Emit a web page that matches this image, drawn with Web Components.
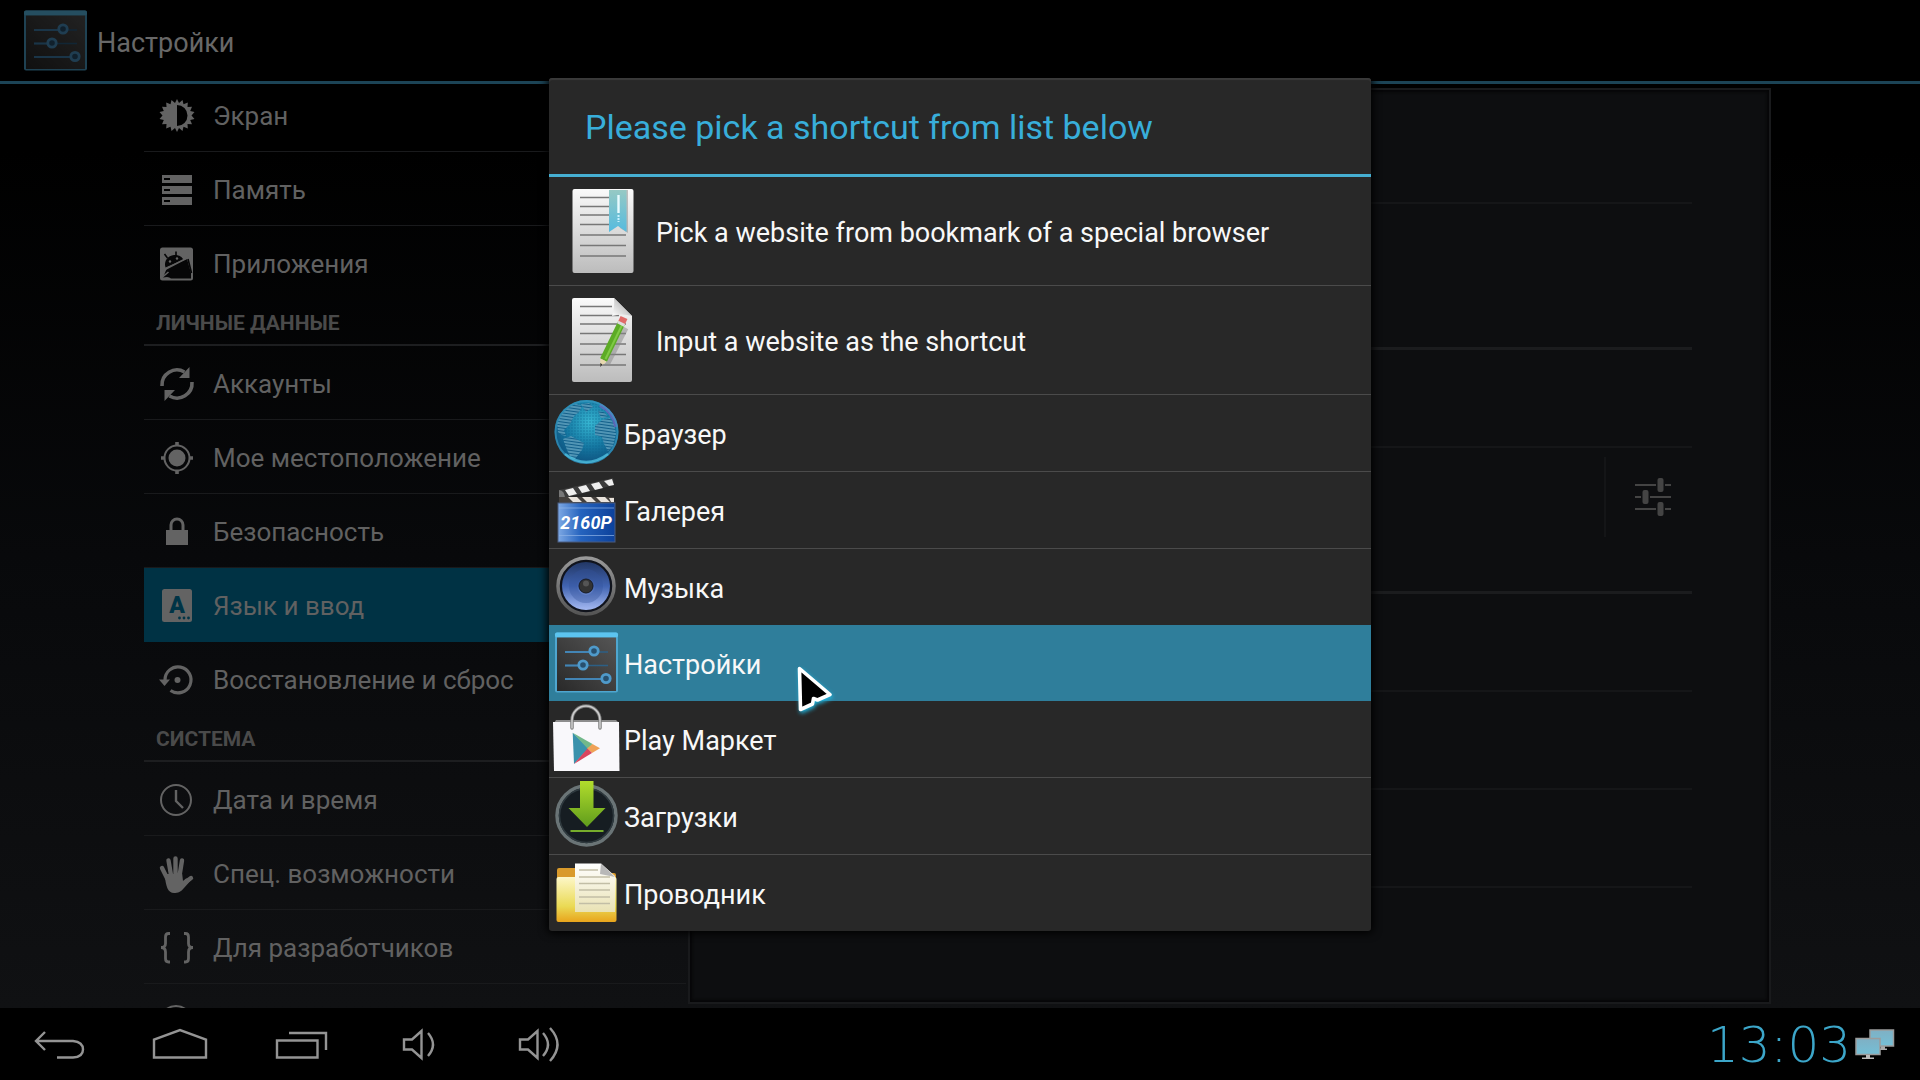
<!DOCTYPE html>
<html lang="ru">
<head>
<meta charset="utf-8">
<title>Настройки</title>
<style>
  html, body {
    height: 100%;
    margin: 0;
    background: #000;
    font-family: Roboto, "Noto Sans", sans-serif;
  }
</style>
</head>
<body>
<tablet-screen>
  <app-header slot="header" icon="settings">Настройки</app-header>

  <settings-nav slot="nav">
    <nav-item icon="display">Экран</nav-item>
    <nav-item icon="storage">Память</nav-item>
    <nav-item icon="apps" last>Приложения</nav-item>
    <nav-heading>ЛИЧНЫЕ ДАННЫЕ</nav-heading>
    <nav-item icon="sync">Аккаунты</nav-item>
    <nav-item icon="location">Мое местоположение</nav-item>
    <nav-item icon="lock">Безопасность</nav-item>
    <nav-item icon="language" selected>Язык и ввод</nav-item>
    <nav-item icon="restore" last>Восстановление и сброс</nav-item>
    <nav-heading>СИСТЕМА</nav-heading>
    <nav-item icon="clock">Дата и время</nav-item>
    <nav-item icon="hand">Спец. возможности</nav-item>
    <nav-item icon="braces">Для разработчиков</nav-item>
    <nav-item icon="about"></nav-item>
  </settings-nav>

  <pref-panel slot="panel"></pref-panel>

  <shortcut-dialog slot="dialog" heading="Please pick a shortcut from list below">
    <shortcut-item icon="bookmark" large>Pick a website from bookmark of a special browser</shortcut-item>
    <shortcut-item icon="edit" large>Input a website as the shortcut</shortcut-item>
    <shortcut-item icon="browser">Браузер</shortcut-item>
    <shortcut-item icon="gallery">Галерея</shortcut-item>
    <shortcut-item icon="music" flush>Музыка</shortcut-item>
    <shortcut-item icon="settings" selected flush>Настройки<mouse-pointer slot="pointer"></mouse-pointer></shortcut-item>
    <shortcut-item icon="play">Play Маркет</shortcut-item>
    <shortcut-item icon="downloads">Загрузки</shortcut-item>
    <shortcut-item icon="files" flush>Проводник</shortcut-item>
  </shortcut-dialog>

  <system-bar slot="system" time="13:03"></system-bar>
</tablet-screen>

<script>
/*
 * Icons. Each entry is [viewBox, markup].
 * Line icons use currentColor, launcher icons have their own colours.
 */
const pageLines = (x2) => `
  <g stroke="#777" stroke-width="1.6">
    <path d="M8 9.500H${x2}M8 18.500H${x2}M8 27H${x2}M8 36.500H${x2}M8 47H54M8 57.500H54M8 68H54"/>
  </g>`;

const ICONS = {
  display: ["0 0 36 36", `
    <path fill="currentColor" fill-rule="evenodd" d="M18 1l2 4 3.500-3 1 4.300 4.300-1.800-.3 4.500 4.500-.3-1.800 4.200 4.300 1.200-3 3.400 3 3.400-4.300 1.200 1.800 4.200-4.500-.3.3 4.500-4.300-1.800-1 4.300-3.500-3-2 4-2-4-3.500 3-1-4.300-4.300 1.800.3-4.500-4.500.3 1.800-4.200-4.300-1.200 3-3.400-3-3.400 4.300-1.200L3 8.700l4.500.3-.3-4.500 4.300 1.800 1-4.300 3.500 3zM18 7v21a10.500 10.500 0 0 0 0-21z"/>`],
  storage: ["0 0 36 36", `
    <path fill="currentColor" fill-rule="evenodd" d="M3 3h30v8H3zM3 14h30v8H3zM3 25h30v8H3zM5 6v2h6V6zM5 17v2h6v-2zM5 28v2h6v-2z"/>`],
  apps: ["0 0 36 36", `
    <rect x="1" y="1.500" width="33" height="33" rx="2.500" fill="currentColor"/>
    <path fill="#060607" d="M8 22L4 31.500 8 31c1.500 0 3 1 4 1.500h20V27l-4-14z"/>
    <path fill="#060607" d="M6.500 21.500C4.500 15 9 9.500 15 9c5-.5 8 2 9.500 4.500z"/>
    <path d="M8.500 12L5.500 8M17 10V5.500M29 13l3.500 14" stroke="#060607" stroke-width="1.600"/>
    <path d="M4 24.500L30 11M3.500 31l6-5" stroke="currentColor" stroke-width="1.600"/>
    <circle cx="11" cy="15.500" r="1.200" fill="currentColor"/><circle cx="18" cy="12.500" r="1.200" fill="currentColor"/>`],
  sync: ["0 0 36 36", `
    <g fill="none" stroke="currentColor" stroke-width="3.600">
      <path d="M3 20A15 15 0 0 1 25.500 6M33 16A15 15 0 0 1 10.500 30"/>
    </g>
    <path fill="currentColor" d="M30.500 1v11H20zM5.500 35V24H16z"/>`],
  location: ["0 0 36 36", `
    <circle cx="18" cy="18" r="8.500" fill="currentColor"/>
    <circle cx="18" cy="18" r="12.500" fill="none" stroke="currentColor" stroke-width="2"/>
    <path d="M18 2v4M18 30v4M2 18h4M30 18h4" stroke="currentColor" stroke-width="3.600"/>`],
  lock: ["0 0 36 36", `
    <rect x="7" y="16" width="22" height="15" fill="currentColor"/>
    <path d="M12 17v-6a6 6 0 0 1 12 0v6" fill="none" stroke="currentColor" stroke-width="3"/>`],
  language: ["0 0 36 36", `
    <rect x="3" y="1" width="30" height="33" rx="2.500" fill="currentColor"/>
    <text x="18" y="25" text-anchor="middle" font-family="Roboto, sans-serif" font-size="23" font-weight="900" fill="#003446">A</text>
    <g fill="#003446"><circle cx="20.500" cy="30" r="1.400"/><circle cx="25" cy="30" r="1.400"/><circle cx="29.500" cy="30" r="1.400"/></g>`],
  restore: ["0 0 36 36", `
    <path d="M6 18A13 13 0 1 1 11.500 28.500" fill="none" stroke="currentColor" stroke-width="3.200"/>
    <path fill="currentColor" d="M0 17.500h11L5.500 24z"/>
    <circle cx="18.500" cy="18" r="3" fill="currentColor"/>`],
  clock: ["0 0 36 36", `
    <g fill="none" stroke="currentColor" stroke-width="2">
      <circle cx="17" cy="18" r="15"/>
      <path d="M17 8v11l7 7" stroke-width="2.400"/>
    </g>`],
  hand: ["0 0 36 36", `
    <g fill="none" stroke="currentColor" stroke-linecap="round" stroke-width="4.400">
      <path d="M8 22L3 12M12 19L9.500 4.500M16.500 19V2.500M20.500 20l2.500-15.500M24 28l8-6"/>
    </g>
    <path fill="currentColor" d="M5.500 18l17.700 0 .8 7 3-2.500L33.500 22.500 25 32c-3 4-6 5-10 5-6 0-8-6-9.500-19z"/>`],
  braces: ["0 0 36 36", `
    <path fill="none" stroke="currentColor" stroke-width="2.800" d="M11 3.500H9.500Q6.500 3.500 6.500 7v6.500Q6.500 17.500 2 17.500 6.500 17.500 6.500 22v6.500Q6.500 32 9.500 32H11M25 3.500h1.500Q29.500 3.500 29.500 7v6.500q0 4 4.500 4-4.500 0-4.500 4.500v6.500Q29.500 32 26.500 32H25"/>`],
  about: ["0 0 36 36", `
    <circle cx="17" cy="18" r="16" fill="none" stroke="currentColor" stroke-width="2"/>
    <path d="M17 16v11M17 10v3" stroke="currentColor" stroke-width="3"/>`],
  tune: ["0 0 38 38", `
    <path d="M1 7h21M31 7h6M1 19h6M16 19h21M1 31h21M31 31h6" stroke="currentColor" stroke-width="2"/>
    <g fill="currentColor"><rect x="23.500" y="0" width="6" height="14" rx="2"/><rect x="8.500" y="12" width="6" height="14" rx="2"/><rect x="23.500" y="24" width="6" height="14" rx="2"/></g>`],

  /* Launcher icons */
  bookmark: ["0 0 62 86", `
    <linearGradient id="a" x2="0" y2="1"><stop stop-color="#fafafa"/><stop offset="1" stop-color="#bcbcbc"/></linearGradient>
    <linearGradient id="b" x2="0" y2="1"><stop stop-color="#96c9c4"/><stop offset="1" stop-color="#55bbdf"/></linearGradient>
    <rect x=".5" y="1" width="61" height="84" rx="2" fill="url(#a)"/>
    ${pageLines(37)}
    <path d="M40 2h16v43l-8-5z" fill="#999" opacity=".6"/>
    <path d="M37 2h17.500v42l-8.500-6-9 6z" fill="url(#b)"/>
    <path d="M46.500 7v18" stroke="#e8fbff" stroke-width="2.400"/>
    <path d="M46.500 27v7" stroke="#c9f1ff" stroke-width="2" stroke-dasharray="2 1"/>`],
  edit: ["0 0 62 86", `
    <linearGradient id="a" x2="0" y2="1"><stop stop-color="#fafafa"/><stop offset="1" stop-color="#bcbcbc"/></linearGradient>
    <linearGradient id="b" x1="0" y1="1" x2="1" y2="0"><stop stop-color="#fff"/><stop offset="1" stop-color="#999"/></linearGradient>
    <path d="M0 3Q0 1 2 1h40l18 18v64q0 2-2 2H2q-2 0-2-2z" fill="url(#a)"/>
    ${pageLines(40)}
    <path d="M40 27H54M40 36.500H54M40 18.500h7" stroke="#777" stroke-width="1.600"/>
    <path d="M42 1q1 8-2 18 10-3 20 0z" fill="url(#b)"/>
    <path d="M54 31L35 68" stroke="#888" stroke-width="5" opacity=".5"/>
    <path d="M49.500 26L31.500 63" stroke="#5cab25" stroke-width="7.500"/>
    <path d="M51 26L33.500 62" stroke="#7fca45" stroke-width="2"/>
    <path d="M52 20.500L49.500 26" stroke="#e06a68" stroke-width="7.500"/>
    <path d="M49.800 25.300l-1.300 2.700" stroke="#ddd" stroke-width="7.500"/>
    <path d="M28.200 61.500l6.600 3.200L28.500 69z" fill="#e8d8ae"/><path d="M28.300 66l2.200 1.600-2.200 2.400z" fill="#333"/>`],
  browser: ["0 0 66 66", `
    <radialGradient id="a" cx=".55" cy=".35" r=".7"><stop stop-color="#37b7d3"/><stop offset=".55" stop-color="#1578a2"/><stop offset="1" stop-color="#0d4a78"/></radialGradient>
    <pattern id="p" width="3" height="3" patternUnits="userSpaceOnUse" patternTransform="rotate(8)"><rect width="3" height="3" fill="#125f8a"/><path d="M0 1h3" stroke="#8fcbe0" stroke-width="1"/></pattern>
    <pattern id="q" width="3" height="3" patternUnits="userSpaceOnUse"><circle cx="1" cy="1" r=".7" fill="#0b5f89"/></pattern>
    <circle cx="33.500" cy="32" r="32" fill="url(#a)"/>
    <circle cx="33.500" cy="32" r="30" fill="url(#q)" opacity=".7"/>
    <path fill="url(#p)" d="M4 24C8 13 14 7 23 4l6 2-3 6-5 4-4 8-6 6 2 6-4-1-4-3zM10 39l8-3 7 4 6 3-2 7-7 9-4-1-4-8zM42 26l7-6 8-2 4 6 2 10-3 12-5 5-4-7-2-7-7-2zM28 4l8-1 4 4-7 5zM45 11l6 1 4 5-7 1z"/>
    <path d="M47 5q14 8 16 22" fill="none" stroke="#775fc0" stroke-width="3.500" opacity=".7"/>
    <circle cx="33.500" cy="32" r="31" fill="none" stroke="#3e9fc4" stroke-width="2" opacity=".6"/>
    <path d="M12 54Q33 70 55 54" fill="none" stroke="#54c8e6" stroke-width="2.500" opacity=".7"/>`],
  gallery: ["0 0 66 66", `
    <linearGradient id="a"><stop stop-color="#7da8e4"/><stop offset=".4" stop-color="#2563be"/><stop offset="1" stop-color="#0c419b"/></linearGradient>
    <path d="M6 13L60 1l1 7L8 22z" fill="#3c3c3c"/>
    <path d="M12 13l8-2 4 6-8 2zM25 10l8-2 4 6-8 2zM38 7l8-2 4 6-8 2zM51 4l8-2 2 6-5 1z" fill="#eee"/>
    <path d="M6 13q6 0 6 10l-6 3z" fill="#777"/>
    <path d="M6 20h55v6H6z" fill="#44403d"/>
    <path d="M15 20h9l5 5h-9zM29 20h9l5 5h-9zM43 20h9l5 5h-9zM56 21h5v4h-3z" fill="#e9e3dc"/>
    <rect x="5" y="26" width="57" height="39" fill="url(#a)" stroke="#4b5d80"/>
    <path d="M6 31h55M6 58.500h55" stroke="#8fb4e8" stroke-width="1" opacity=".7"/>
    <text x="33" y="52" text-anchor="middle" font-family="Roboto, sans-serif" font-size="18" font-weight="700" font-style="italic" fill="#fff">2160P</text>`],
  music: ["0 0 66 66", `
    <linearGradient id="a" x2="0" y2="1"><stop stop-color="#223765"/><stop offset=".5" stop-color="#4164b1"/><stop offset="1" stop-color="#a5b9f2"/></linearGradient>
    <linearGradient id="b" x2="0" y2="1"><stop stop-color="#999"/><stop offset="1" stop-color="#555"/></linearGradient>
    <circle cx="33" cy="32" r="28" fill="#10131c" stroke="url(#b)" stroke-width="3.500"/>
    <circle cx="33" cy="32" r="24" fill="url(#a)"/>
    <circle cx="33" cy="32" r="13" fill="none" stroke="#34549b" stroke-width="8" opacity=".35"/>
    <circle cx="33" cy="32" r="7" fill="#333" stroke="#171b26" stroke-width="1"/>
    <circle cx="33" cy="29.500" r="3" fill="#555"/>`],
  settings: ["0 0 66 66", `
    <linearGradient id="a" x1="0" y1="1" x2="1" y2="0"><stop stop-color="#292929"/><stop offset="1" stop-color="#555"/></linearGradient>
    <rect x="2" y="2.500" width="63" height="60" rx="2" fill="#4fa6cf"/>
    <rect x="2" y="2.500" width="63" height="5" rx="2" fill="#5cc4f0"/>
    <rect x="4" y="7.500" width="59" height="53.500" fill="url(#a)"/>
    <g stroke="#2c5f85" stroke-width="1.600"><path d="M12 22h43M12 35.500h43M12 49h43"/></g>
    <g stroke="#4385b5" stroke-width="2.200"><path d="M12 22h29M12 35.500h18M12 49h41"/></g>
    <g fill="#28506e" stroke="#4f9aca" stroke-width="2.800"><circle cx="41" cy="21" r="4.200"/><circle cx="30" cy="35" r="4.200"/><circle cx="53" cy="48.500" r="4.200"/></g>`],
  play: ["0 0 66 66", `
    <path d="M1 17l2-3h60l3 3z" fill="#8d8d8d"/>
    <path d="M0 16h66l.5 49H1z" fill="#f9f8fb"/>
    <path d="M19 22V14a14 14 0 0 1 28 0v8" fill="none" stroke="#777" stroke-width="3.400" stroke-linecap="round"/>
    <path d="M19 22V14a14 14 0 0 1 28 0v8" fill="none" stroke="#ccc" stroke-width="1.600" stroke-linecap="round"/>
    <path d="M19.700 26.700L36 42 21 58z" fill="#3a92ac"/>
    <path d="M19.700 26.700L39.500 38 35 43z" fill="#72b88a"/>
    <path d="M39.500 38L47 42.300 39 47l-5-4.500z" fill="#efa257"/>
    <path d="M21 58L34.500 42.500 39 47z" fill="#d9455f"/>`],
  downloads: ["0 0 66 66", `
    <linearGradient id="a" x2="0" y2="1"><stop stop-color="#b2dd2c"/><stop offset="1" stop-color="#5f9c1c"/></linearGradient>
    <circle cx="33.500" cy="32.500" r="29.500" fill="#161d22" stroke="#6a7476" stroke-width="3.500"/>
    <circle cx="33.500" cy="32.500" r="27" fill="none" stroke="#2f3a3f" stroke-width="1.500"/>
    <path d="M27-2h13.500v27h12L34 44 15.500 25H27z" fill="url(#a)"/>
    <path d="M17.500 48h33" stroke="#76ad2c" stroke-width="2.200"/>`],
  files: ["0 0 66 66", `
    <linearGradient id="a" x2="0" y2="1"><stop stop-color="#fdf7c8"/><stop offset=".65" stop-color="#eada55"/><stop offset="1" stop-color="#e8a41c"/></linearGradient>
    <linearGradient id="b" x2="0" y2="1"><stop stop-color="#fff"/><stop offset="1" stop-color="#e9e2b4"/></linearGradient>
    <path d="M4 10q0-2 2-2h16l4 5h35q2 0 2 2v12H4z" fill="#d99a2b"/>
    <path d="M3.500 19q0-2 2-2h56q2 0 2 2v41q0 2-2 2h-56q-2 0-2-2z" fill="url(#a)"/>
    <path d="M22 3.500h26L62 16v36H22z" fill="url(#b)"/>
    <path d="M48 3.500L47 14l15 3z" fill="#b8b8b8"/>
    <path d="M26 10h19M26 17h31M26 23.500h31M26 30h31M26 37h31M26 43.500h31" stroke="#c2bea6" stroke-width="1.500"/>`],

  /* System bar */
  back: ["0 0 56 40", `<path d="M13 6L4 15l9 9M5 15h36q10 1 10 8.500T41 31.500H25" fill="none" stroke="currentColor" stroke-width="2.400"/>`],
  home: ["0 0 56 40", `<path d="M2 31.500V13.500L28 4l26 9.500v18z" fill="none" stroke="currentColor" stroke-width="2.400"/>`],
  recent: ["0 0 56 40", `<path d="M5 14.500h40.500v17H5zM17 7h37v17" fill="none" stroke="currentColor" stroke-width="2.400"/>`],
  quieter: ["0 0 56 40", `<path d="M12 13.500h8l9.500-8.500v27L20 23.500h-8zM36 7q10 11.500 0 23" fill="none" stroke="currentColor" stroke-width="2.400"/>`],
  louder: ["0 0 56 40", `<path d="M8 13.500h8l9.500-8.500v27L16 23.500H8zM31 7q10 11.500 0 23M38 2q15 16.500 0 33" fill="none" stroke="currentColor" stroke-width="2.400"/>`],
  network: ["0 0 40 32", `
    <linearGradient id="a" x2="0" y2="1"><stop stop-color="#7fb0c4"/><stop offset="1" stop-color="#74bfd6"/></linearGradient>
    <path d="M26 17h4v3h-4zM22 19.500h10v1.500H22z" fill="#aaa"/>
    <rect x="15" y="1" width="23.500" height="16" fill="url(#a)" stroke="#9b9c9c" stroke-width="1.500"/>
    <rect x="1" y="9.500" width="24" height="16" fill="url(#a)" stroke="#9b9c9c" stroke-width="1.500"/>
    <path d="M11 26h4v3h-4zM7 28.500h12V30H7z" fill="#bbb"/>`],
};

class UiIcon extends HTMLElement {
  connectedCallback() {
    const [viewBox, markup] = ICONS[this.getAttribute("name")];
    this.attachShadow({ mode: "open" }).innerHTML = `
      <style>
        :host { display: block; flex: none; }
        svg { display: block; width: 100%; height: 100%; overflow: visible; }
      </style>
      <svg viewBox="${viewBox}" aria-hidden="true">${markup}</svg>
    `;
  }
}

/* Whole screen: app area with the dialog over it, system bar at the bottom. */
class TabletScreen extends HTMLElement {
  connectedCallback() {
    this.attachShadow({ mode: "open" }).innerHTML = `
      <style>
        :host {
          display: flex;
          flex-direction: column;
          height: 100vh;
          overflow: hidden;
        }
        .app {
          position: relative;
          flex: 1;
          min-height: 0;
          display: flex;
          flex-direction: column;
          background: linear-gradient(#000 15%, #08090b 55%, #101113);
        }
        .columns {
          flex: 1;
          min-height: 0;
          display: flex;
          padding: 0 149px 0 144px;
        }
        ::slotted([slot="nav"]) { flex: 0 1 542px; }
        ::slotted([slot="panel"]) { flex: 1; }
        .overlay {
          position: absolute;
          inset: 0;
          display: grid;
          justify-items: center;
          align-items: center;
        }
      </style>
      <div class="app">
        <slot name="header"></slot>
        <main class="columns">
          <slot name="nav"></slot>
          <slot name="panel"></slot>
        </main>
        <div class="overlay"><slot name="dialog"></slot></div>
      </div>
      <slot name="system"></slot>
    `;
  }
}

class AppHeader extends HTMLElement {
  connectedCallback() {
    this.attachShadow({ mode: "open" }).innerHTML = `
      <style>
        :host { display: block; background: #000; border-bottom: 3px solid #1c4456; }
        header {
          display: flex;
          align-items: center;
          gap: 9px;
          height: 81px;
          padding-left: 22px;
        }
        ui-icon { width: 66px; height: 66px; opacity: 0.4; }
        h1 {
          margin: 0;
          padding-top: 4px;
          font-size: 27px;
          font-weight: 400;
          color: #686868;
        }
      </style>
      <header>
        <ui-icon name="${this.getAttribute("icon")}"></ui-icon>
        <h1><slot></slot></h1>
      </header>
    `;
  }
}

class SettingsNav extends HTMLElement {
  connectedCallback() {
    this.attachShadow({ mode: "open" }).innerHTML = `
      <style>
        :host { display: block; overflow: hidden; }
        /* the list is scrolled a little, so its first row is cut */
        nav { margin-top: -6px; }
      </style>
      <nav><slot></slot></nav>
    `;
  }
}

class NavHeading extends HTMLElement {
  connectedCallback() {
    this.attachShadow({ mode: "open" }).innerHTML = `
      <style>
        :host { display: block; border-bottom: 2px solid #1d1e20; }
        h2 {
          margin: 0;
          padding: 3px 0 0 12px;
          font-size: 21px;
          line-height: 42px;
          font-weight: 700;
          color: #4a4a4a;
        }
      </style>
      <h2><slot></slot></h2>
    `;
  }
}

class NavItem extends HTMLElement {
  connectedCallback() {
    this.attachShadow({ mode: "open" }).innerHTML = `
      <style>
        :host { display: block; border-bottom: 1px solid #191a1c; }
        :host([last]) { border-bottom: 0; }
        :host([selected]) { background: #003244; border-color: #003244; }
        a {
          display: flex;
          align-items: center;
          gap: 18px;
          box-sizing: border-box;
          height: 73px;
          padding: 3px 0 0 15px;
          font-size: 26px;
          white-space: nowrap;
          color: #616161;
          text-decoration: none;
        }
        ui-icon { width: 36px; height: 36px; color: #636363; }
      </style>
      <a href="#${this.getAttribute("icon")}">
        <ui-icon name="${this.getAttribute("icon")}"></ui-icon>
        <span><slot></slot></span>
      </a>
    `;
  }
}

class PrefPanel extends HTMLElement {
  connectedCallback() {
    this.attachShadow({ mode: "open" }).innerHTML = `
      <style>
        :host {
          display: block;
          box-sizing: border-box;
          margin: 4px 0 4px 2px;
          padding: 1px 77px 0 66px;
          border: 2px solid #191a1c;
          background: #0d0e10;
          box-shadow: inset 0 0 3px 2px #060607;
        }
        .row, .group {
          box-sizing: border-box;
          height: 98px;
          border-bottom: 2px solid #151618;
        }
        .first { height: 113px; }
        .group { height: 146px; border-bottom: 3px solid #1b1c1e; }
        .method { display: flex; justify-content: flex-end; align-items: flex-start; }
        button {
          display: flex;
          align-items: center;
          justify-content: center;
          width: 88px;
          height: 80px;
          margin-top: 9px;
          padding: 0 0 0 8px;
          border: 0;
          border-left: 2px solid #141517;
          background: none;
          color: #444;
        }
        ui-icon { width: 38px; height: 38px; }
      </style>
      <div class="row first"></div>
      <div class="group"></div>
      <div class="row"></div>
      <div class="group method">
        <button type="button" aria-label="Настройки"><ui-icon name="tune"></ui-icon></button>
      </div>
      <div class="row"></div>
      <div class="row"></div>
      <div class="row"></div>
    `;
  }
}

class ShortcutDialog extends HTMLElement {
  connectedCallback() {
    this.attachShadow({ mode: "open" }).innerHTML = `
      <style>
        :host {
          display: block;
          width: 100%;
          max-width: 822px;
          background: #282828;
          border-radius: 3px;
          box-shadow: 0 0 8px 2px #000, inset 0 2px 1px #3a3a3a;
        }
        h2 {
          margin: 0;
          padding: 2px 36px 0;
          font-size: 34px;
          line-height: 94px;
          font-weight: 400;
          white-space: nowrap;
          color: #38aeda;
          border-bottom: 3px solid #46afd2;
        }
      </style>
      <section role="dialog" aria-labelledby="title">
        <h2 id="title">${this.getAttribute("heading")}</h2>
        <slot></slot>
      </section>
    `;
  }
}

class ShortcutItem extends HTMLElement {
  connectedCallback() {
    this.attachShadow({ mode: "open" }).innerHTML = `
      <style>
        :host {
          display: block;
          position: relative;
          border-bottom: 1px solid #4b4b4b;
        }
        :host([flush]) { border-bottom: 0; }
        :host([selected]) { background: #2f7e9b; }
        button {
          display: flex;
          align-items: center;
          gap: 5px;
          box-sizing: border-box;
          width: 100%;
          height: 76px;
          padding: 0 4px;
          border: 0;
          background: none;
          font: 27px Roboto, "Noto Sans", sans-serif;
          text-align: left;
          color: #f8f8f8;
        }
        span { padding-top: 4px; }
        ui-icon { width: 66px; height: 66px; }
        :host([large]) button { height: 108px; padding: 0 23px; gap: 22px; }
        :host([large]) ui-icon { width: 62px; height: 86px; }
      </style>
      <button type="button">
        <ui-icon name="${this.getAttribute("icon")}"></ui-icon>
        <span><slot></slot></span>
      </button>
      <slot name="pointer"></slot>
    `;
  }
}

class MousePointer extends HTMLElement {
  connectedCallback() {
    this.attachShadow({ mode: "open" }).innerHTML = `
      <style>
        :host {
          position: absolute;
          left: 248px;
          top: 41px;
          z-index: 1;
          width: 36px;
          height: 46px;
          filter: drop-shadow(1px 2px 2px #1fb4dd);
        }
        svg { display: block; overflow: visible; }
      </style>
      <svg viewBox="0 0 36 46" width="36" height="46" aria-hidden="true">
        <path d="M2.500 2.500L33 28.500 20.500 34 16.500 32.500 15.500 38 3.500 43.500z" fill="#000" stroke="#fff" stroke-width="3.600" stroke-linejoin="round"/>
      </svg>
    `;
  }
}

class SystemBar extends HTMLElement {
  connectedCallback() {
    const keys = [
      ["back", "Назад"],
      ["home", "Домой"],
      ["recent", "Недавние"],
      ["quieter", "Тише"],
      ["louder", "Громче"],
    ];
    this.attachShadow({ mode: "open" }).innerHTML = `
      <style>
        :host {
          display: flex;
          align-items: center;
          justify-content: space-between;
          height: 72px;
          padding: 0 25px 0 0;
          background: #000;
        }
        .keys { display: flex; }
        button {
          display: grid;
          place-items: center;
          width: 120px;
          height: 72px;
          padding: 4px 0 0;
          border: 0;
          background: none;
          color: #949494;
        }
        button ui-icon { width: 56px; height: 40px; }
        .status { display: flex; align-items: center; gap: 4px; padding-top: 2px; }
        time {
          font-family: "DejaVu Sans", sans-serif;
          font-size: 50px;
          font-weight: 200;
          line-height: 70px;
          color: #3ca6c9;
        }
        .status ui-icon { width: 40px; height: 32px; }
      </style>
      <div class="keys">
        ${keys.map(([name, label]) => `<button type="button" aria-label="${label}"><ui-icon name="${name}"></ui-icon></button>`).join("")}
      </div>
      <div class="status">
        <time>${this.getAttribute("time")}</time>
        <ui-icon name="network"></ui-icon>
      </div>
    `;
  }
}

customElements.define("ui-icon", UiIcon);
customElements.define("tablet-screen", TabletScreen);
customElements.define("app-header", AppHeader);
customElements.define("settings-nav", SettingsNav);
customElements.define("nav-heading", NavHeading);
customElements.define("nav-item", NavItem);
customElements.define("pref-panel", PrefPanel);
customElements.define("shortcut-dialog", ShortcutDialog);
customElements.define("shortcut-item", ShortcutItem);
customElements.define("mouse-pointer", MousePointer);
customElements.define("system-bar", SystemBar);
</script>
</body>
</html>
